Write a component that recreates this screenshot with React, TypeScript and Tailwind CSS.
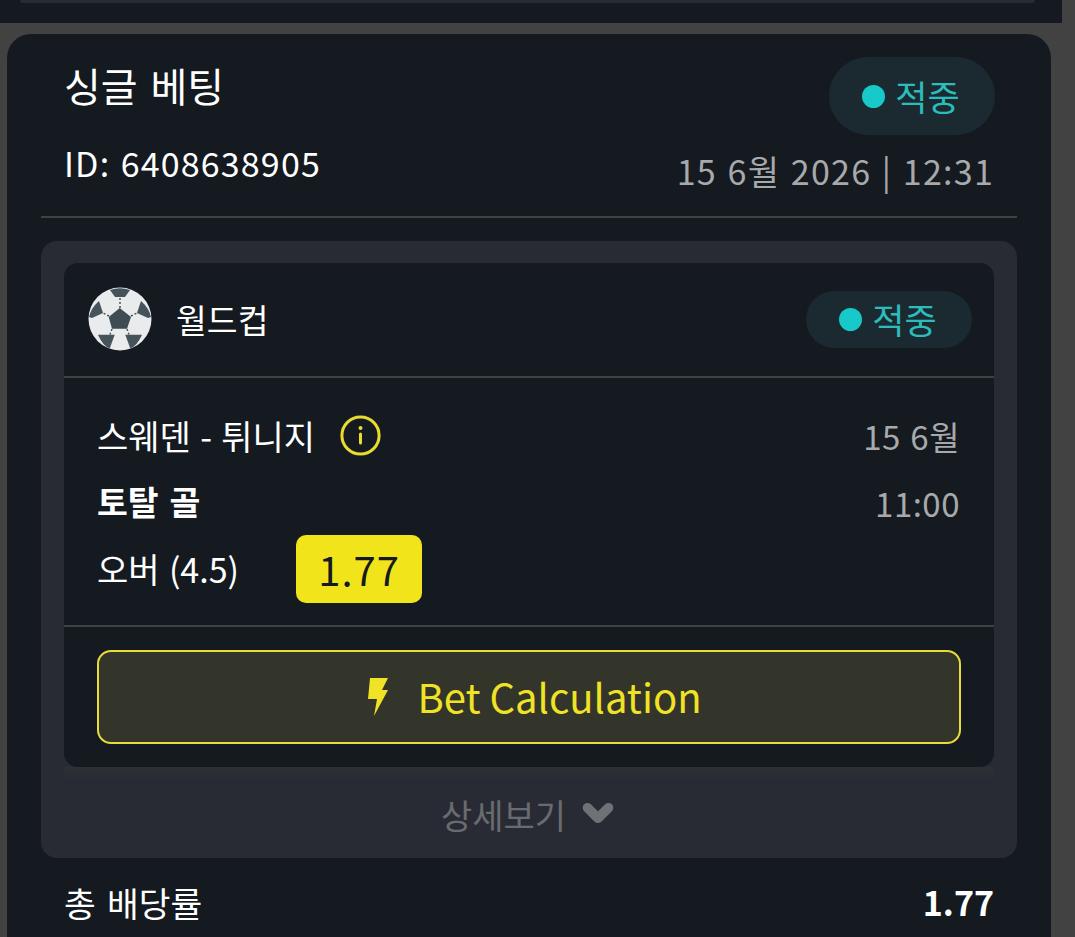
import { ChevronDown } from 'lucide-react'

const font = "[font-family:'Noto_Sans_CJK_KR','Noto_Sans',sans-serif]"

function StatusBadge({ className }: { className: string }) {
  return (
    <div
      className={`flex w-[166px] items-center justify-center gap-[10px] rounded-full bg-[#1a2a30] text-[35px] leading-none text-[#2cbcbc] ${className}`}
    >
      <span className="-ml-[2px] h-[23px] w-[23px] rounded-full bg-[#17c9c9]" />
      <span className="-mt-[2px]">적중</span>
    </div>
  )
}

function SoccerBall() {
  return (
    <svg width="64" height="64" viewBox="0 0 64 64" className="-mt-[1px] shrink-0">
      <circle cx="32" cy="32" r="31.5" fill="#e9ebed" />
      <path d="M31.7 21 L43 30 L39 41.7 L24 41.7 L20.7 30 Z" fill="#3f4c54" />
      <path d="M22 3 Q32 -0.5 42 3 L37 10 L27 10 Z" fill="#46535b" />
      <path d="M53 14 Q61 21 63 30 L60 31 L49 26 Z" fill="#46535b" />
      <path d="M11 14 Q3 21 1 30 L4 31 L15 26 Z" fill="#46535b" />
      <path d="M10 47.7 L26.7 47.7 L21.7 61.5 Q15 59 10 47.7 Z" fill="#46535b" />
      <path d="M54 47.7 L37.3 47.7 L42.3 61.5 Q49 59 54 47.7 Z" fill="#46535b" />
      <path
        d="M32 11 V21 M43 29 L49 26 M21 29 L15 26 M24 42 L22 47.5 M39 42 L41 47.5"
        stroke="#3f4c54"
        strokeWidth="1.4"
        strokeDasharray="2 2"
      />
    </svg>
  )
}

function InfoIcon() {
  return (
    <svg width="41" height="41" viewBox="0 0 41 41" fill="none" className="-mt-[2px] shrink-0">
      <circle cx="20.5" cy="20.5" r="18.6" stroke="#e8dc2e" strokeWidth="3" />
      <circle cx="20.5" cy="13" r="2" fill="#e8dc2e" />
      <rect x="19" y="17.5" width="3" height="12" rx="1.5" fill="#e8dc2e" />
    </svg>
  )
}

function Bolt() {
  return (
    <svg width="20" height="38" viewBox="0 0 20 38" className="shrink-0">
      <path d="M2 0 H20 L14 12 H20 L6 38 L9 21 H0 Z" fill="#f0e224" />
    </svg>
  )
}

export default function App() {
  return (
    <div className={`h-[937px] w-[1075px] overflow-hidden bg-[#424242] ${font}`}>
      <div className="h-[23px] w-[1062px] bg-[#141a1f] px-[20px]">
        <div className="h-[3px] w-[1015px] rounded-b-[10px] bg-[#282b33]" />
      </div>

      <div className="mt-[11px] ml-[7px] h-[1000px] w-[1044px] rounded-t-[24px] bg-[#141a1f] px-[34px]">
        <div className="relative h-[184px] border-b-2 border-[#3f4244] px-[23px]">
          <h1 className="pt-[25px] text-[40px] leading-[52px] font-normal text-white [word-spacing:0.1em]">
            싱글 베팅
          </h1>
          <p className="mt-[30px] text-[34px] leading-[44px] tracking-[1.15px] text-white [word-spacing:0.05em]">
            ID: 6408638905
          </p>
          <StatusBadge className="absolute top-[23px] right-[22px] h-[78px]" />
          <p className="absolute top-[114px] right-[23px] text-[34px] leading-[46px] tracking-[1.25px] text-[#a8a9ab] [word-spacing:0.05em]">
            15 6월 2026 | 12:31
          </p>
        </div>

        <div className="mt-[23px] h-[617px] rounded-[16px] bg-[#282b33] px-[23px] pt-[22px]">
          <div className="h-[504px] rounded-[14px] bg-[#141a1f]">
            <div className="flex h-[115px] items-center justify-between border-b-2 border-[#3f4244] pr-[22px] pl-[24px]">
              <div className="flex items-center gap-[24px]">
                <SoccerBall />
                <span className="text-[33.5px] text-white">월드컵</span>
              </div>
              <StatusBadge className="h-[57px]" />
            </div>

            <div className="flex h-[249px] justify-between border-b-2 border-[#3f4244] pr-[34px] pl-[33px]">
              <div>
                <div className="mt-[34px] flex h-[48px] items-center gap-[25px]">
                  <span className="text-[34px] leading-[48px] text-white [word-spacing:0.05em]">스웨덴 - 튀니지</span>
                  <InfoIcon />
                </div>
                <p className="mt-[18px] text-[33.5px] leading-[46px] font-bold text-white [word-spacing:0.1em]">토탈 골</p>
                <div className="mt-[11px] flex items-center gap-[57px]">
                  <span className="text-[34px] leading-[48px] text-white [word-spacing:0.05em]">오버 (4.5)</span>
                  <span className="flex h-[68px] w-[126px] items-center justify-center rounded-[10px] bg-[#f2e41a] text-[40px] tracking-[1px] text-[#141a1f]">
                    1.77
                  </span>
                </div>
              </div>
              <div className="pt-[35px] text-right text-[33px] leading-[46px] tracking-[0.5px] text-[#a8a9ab] [word-spacing:0.05em]">
                <p>15 6월</p>
                <p className="mt-[21px]">11:00</p>
              </div>
            </div>

            <div className="px-[33px] pt-[23px]">
              <button className="flex h-[94px] w-full items-center justify-center gap-[29px] rounded-[14px] border-2 border-[#e8dc3a] bg-[#33342a] pl-[12px] text-[40px] text-[#f0e224]">
                <Bolt />
                <span className="-mt-[2px]">Bet Calculation</span>
              </button>
            </div>
          </div>

          <div className="h-[12px] bg-gradient-to-b from-[#2c3134] to-[#282b33]" />
          <div className="flex h-[79px] items-center justify-center gap-[11px] pb-[12px] pl-[2px] text-[34px] text-[#686b70]">
            <span className="mt-[4px]">상세보기</span>
            <ChevronDown size={42} strokeWidth={5.5} className="text-[#6e7175]" />
          </div>
        </div>

        <div className="flex items-center justify-between px-[23px] pt-[19px]">
          <span className="text-[34.5px] leading-[50px] text-white [word-spacing:0.1em]">총 배당률</span>
          <span className="text-[34px] leading-[50px] font-bold text-white">1.77</span>
        </div>
      </div>
    </div>
  )
}
